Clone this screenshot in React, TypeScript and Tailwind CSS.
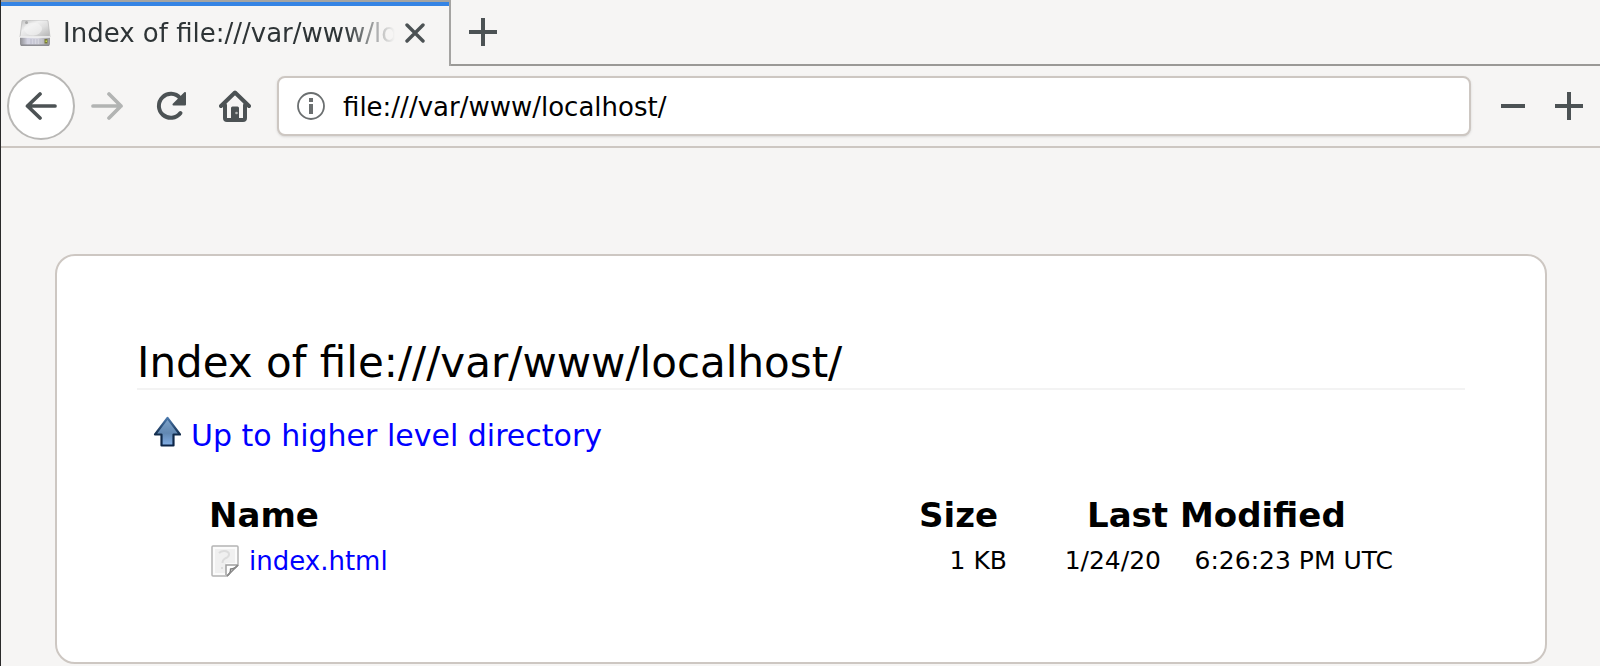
const files = [{ name: "index.html", size: "1 KB", date: "1/24/20", time: "6:26:23 PM UTC" }];

function DriveIcon() {
  return (
    <svg viewBox="0 0 32 26" className="h-[26px] w-8 shrink-0" aria-hidden="true">
      <defs>
        <linearGradient id="drive-top" x1="0" y1="0" x2="1" y2="1">
          <stop offset="0" stopColor="#bdbdbd" />
          <stop offset="0.35" stopColor="#f0f0f0" />
          <stop offset="0.6" stopColor="#dedede" />
          <stop offset="1" stopColor="#b2b2b2" />
        </linearGradient>
        <linearGradient id="drive-front" x1="0" y1="0" x2="1" y2="0">
          <stop offset="0" stopColor="#8e8e92" />
          <stop offset="0.25" stopColor="#d2d2e0" />
          <stop offset="0.6" stopColor="#d8d8e0" />
          <stop offset="1" stopColor="#96969a" />
        </linearGradient>
      </defs>
      <path d="M3 1 Q3 0 5 0 H27 Q29 0 29 1 L31 17 H1 Z" fill="url(#drive-top)" stroke="#bcbcbc" strokeWidth="0.8" />
      <ellipse cx="14" cy="9" rx="9" ry="6.500" fill="#f5f5f5" opacity="0.6" />
      <circle cx="7.500" cy="2.500" r="1.500" fill="#a8a8a8" />
      <path d="M1 17 H31 V24 Q31 26 29 26 H3 Q1 26 1 24 Z" fill="url(#drive-front)" />
      <path d="M1 17 H31" stroke="#f5f5f5" strokeWidth="1.500" />
      <path d="M2 25.200 H30" stroke="#8b8b90" strokeWidth="1.500" />
      <path d="M12 19 V24 M15 19 V24 M18 19 V24 M21 19 V24" stroke="#bcbccb" strokeWidth="1" />
      <rect x="25.500" y="19" width="3" height="4.500" fill="#77783a" />
      <rect x="26.500" y="20.500" width="1.500" height="1.500" fill="#c3d84a" />
    </svg>
  );
}

function FileIcon() {
  return (
    <svg viewBox="0 0 28 32" className="h-8 w-7 shrink-0" aria-hidden="true">
      <path d="M2 1 H26 Q27 1 27 2 V20 L16 31 H2 Q1 31 1 30 V2 Q1 1 2 1 Z" fill="#fbfbfb" stroke="#b4b4b4" strokeWidth="1.500" />
      <path d="M4 4 H24 V18 H15 V28 H4 Z" fill="#f0f0f0" />
      <path d="M8 8 Q10 6 13 6 Q18 6 18 9.500 Q18 12 14 13.500 Q11.500 15 11.500 18 M10 23 H12" fill="none" stroke="#dcdcdc" strokeWidth="2" />
      <path d="M15 30 V20 H26" fill="#fff" stroke="#a0a0a0" strokeWidth="1.500" />
      <path d="M16 31 Q20 28 19.500 24 Q24 24 27 20" fill="#fff" stroke="#7d7d7d" strokeWidth="1.400" strokeLinejoin="round" />
      <path d="M16 31 L27 20" stroke="#8a8a8a" strokeWidth="1.400" />
    </svg>
  );
}

function UpIcon() {
  return (
    <svg viewBox="0 0 28 32" className="h-8 w-7 shrink-0" aria-hidden="true">
      <defs>
        <linearGradient id="up-fill" x1="0" y1="0" x2="0" y2="1">
          <stop offset="0" stopColor="#7fa5cc" />
          <stop offset="0.550" stopColor="#6288b2" />
          <stop offset="1" stopColor="#83afe6" />
        </linearGradient>
        <linearGradient id="up-edge" x1="0" y1="0" x2="0" y2="1">
          <stop offset="0" stopColor="#4a78ac" />
          <stop offset="0.600" stopColor="#122c4c" />
          <stop offset="1" stopColor="#0c2548" />
        </linearGradient>
      </defs>
      <path d="M14.500 2 L27 18.500 H20.500 V29.500 H8.500 V18.500 H2 Z" fill="url(#up-fill)" stroke="url(#up-edge)" strokeWidth="2.200" strokeLinejoin="round" />
    </svg>
  );
}

export default function App() {
  return (
    <div className="flex min-h-screen flex-col border-l border-[#2a2a2a] bg-[#f6f5f4] font-['DejaVu_Sans',sans-serif] text-black">
      <header>
        <div className="flex h-[66px]">
          <div className="flex w-[450px] shrink-0 flex-col border-t-2 border-r-2 border-[#a5a4a2]">
            <div className="h-1 bg-[#3584e4]" />
            <div className="flex h-[54px] items-center pr-[18px] pl-[18px]">
              <DriveIcon />
              <span className="ml-3 min-w-0 flex-1 overflow-hidden text-[26px] leading-8 whitespace-nowrap text-[#2e3436] [mask-image:linear-gradient(to_right,black_85%,transparent)]">
                Index of file:///var/www/localhost/
              </span>
              <button type="button" aria-label="Close tab" className="ml-1 flex h-8 w-8 shrink-0 items-center justify-center text-[#4c5254]">
                <svg viewBox="0 0 20 20" className="size-5" fill="none" stroke="currentColor" strokeWidth="3.400" strokeLinecap="round">
                  <path d="M2 2 L18 18 M18 2 L2 18" />
                </svg>
              </button>
            </div>
          </div>
          <div className="flex flex-1 items-start border-b-2 border-[#9a9996] pt-2 pl-3">
            <button type="button" aria-label="New tab" className="flex h-12 w-10 items-center justify-center text-[#4c5254]">
              <svg viewBox="0 0 28 28" className="size-7" fill="none" stroke="currentColor" strokeWidth="4">
                <path d="M14 0 V28 M0 14 H28" />
              </svg>
            </button>
          </div>
        </div>
        <div className="flex h-[82px] items-center border-b-2 border-[#cdc7c2] pr-[17px] pl-[6px] text-[#4c5254]">
          <button type="button" aria-label="Back" className="flex size-[68px] shrink-0 items-center justify-center rounded-full border-2 border-[#b8b7b5] bg-white">
            <svg viewBox="0 0 32 32" className="size-8" fill="none" stroke="currentColor" strokeWidth="3.700" strokeLinecap="round" strokeLinejoin="round">
              <path d="M30 16 H2.500 M15 4 L2.500 16 L15 28" />
            </svg>
          </button>
          <button type="button" aria-label="Forward" disabled className="flex h-16 w-16 shrink-0 items-center justify-center text-[#b2b4b3]">
            <svg viewBox="0 0 32 32" className="size-8" fill="none" stroke="currentColor" strokeWidth="3.700" strokeLinecap="round" strokeLinejoin="round">
              <path d="M2 16 H30 M18 4 L30 16 L18 28" />
            </svg>
          </button>
          <button type="button" aria-label="Reload" className="flex h-16 w-16 shrink-0 items-center justify-center">
            <svg viewBox="0 0 32 32" className="size-8" fill="none" stroke="currentColor" strokeWidth="4" strokeLinecap="round">
              <path d="M25.500 23 A12 12 0 1 1 25 8" />
              <path d="M30 3 V14.500 H18.500 Z" fill="currentColor" stroke="currentColor" strokeWidth="2" strokeLinejoin="round" />
            </svg>
          </button>
          <button type="button" aria-label="Home" className="flex h-16 w-16 shrink-0 items-center justify-center">
            <svg viewBox="0 0 32 32" className="size-8" fill="none" stroke="currentColor" strokeWidth="4" strokeLinecap="round" strokeLinejoin="round">
              <path d="M2 16 L16 2.500 L30 16" />
              <path d="M6 15 V28 Q6 30 8 30 H24 Q26 30 26 28 V15" />
              <path d="M12 30 V18 Q12 16.500 13.500 16.500 H18.500 Q20 16.500 20 18 V30 Z" fill="currentColor" stroke="none" />
              <circle cx="17.500" cy="23" r="1.300" fill="#b5b7b6" stroke="none" />
            </svg>
          </button>
          <div className="ml-[10px] flex h-[60px] min-w-0 flex-1 items-center rounded-lg border-2 border-[#cdc7c2] bg-white pl-[18px] shadow-sm">
            <svg viewBox="0 0 28 28" className="size-7 shrink-0 text-[#6b6f70]" fill="none" stroke="currentColor" aria-hidden="true">
              <circle cx="14" cy="14" r="13" strokeWidth="1.800" />
              <path d="M14 12 V22" strokeWidth="4" />
              <path d="M14 6 V10" strokeWidth="4" />
            </svg>
            <input type="text" aria-label="Address" defaultValue="file:///var/www/localhost/" className="ml-[18px] h-12 min-w-0 flex-1 bg-transparent pt-[2px] text-[26px] text-black outline-none" />
          </div>
          <button type="button" aria-label="Zoom out" className="ml-7 flex h-12 w-7 shrink-0 items-center justify-center">
            <svg viewBox="0 0 28 28" className="size-7" fill="none" stroke="currentColor" strokeWidth="4">
              <path d="M2 14 H26" />
            </svg>
          </button>
          <button type="button" aria-label="Zoom in" className="ml-7 flex h-12 w-7 shrink-0 items-center justify-center">
            <svg viewBox="0 0 28 28" className="size-7" fill="none" stroke="currentColor" strokeWidth="4">
              <path d="M14 0 V28 M0 14 H28" />
            </svg>
          </button>
        </div>
      </header>
      <main className="mt-[106px] mr-[53px] mb-[2px] ml-[54px] rounded-[20px] border-2 border-[#cdc7c2] bg-white px-20 pt-20 pb-[79px]">
        <h1 className="h-[54px] border-b-2 border-[#f3f3f3] text-[42px] leading-[54px]">Index of file:///var/www/localhost/</h1>
        <p className="mt-[26px] ml-4">
          <a href="#up" className="flex items-start gap-[10px] text-[30px] leading-10 text-[#0000ff]">
            <UpIcon />
            Up to higher level directory
          </a>
        </p>
        <div className="mt-[35px] mr-[70px] ml-[72px]">
          <table className="w-full table-fixed border-collapse text-left">
            <colgroup>
              <col />
              <col className="w-[90px]" />
              <col className="w-[154px]" />
              <col className="w-[234px]" />
            </colgroup>
            <thead>
              <tr className="h-[48px] text-[34px] leading-10 font-bold">
                <th scope="col" className="p-0">Name</th>
                <th scope="col" className="p-0 pl-[2px]">Size</th>
                <th scope="col" colSpan={2} className="p-0 pl-20">Last Modified</th>
              </tr>
            </thead>
            <tbody>
              {files.map((file) => (
                <tr key={file.name} className="h-[44px] text-[25px] leading-8">
                  <td className="p-0 pl-[2px]">
                    <a href="#index" className="flex items-center gap-[10px] text-[26px] text-[#0000ff]">
                      <FileIcon />
                      {file.name}
                    </a>
                  </td>
                  <td className="p-0 text-right">{file.size}</td>
                  <td className="p-0 text-right">{file.date}</td>
                  <td className="p-0 pr-[2px] text-right whitespace-nowrap">{file.time}</td>
                </tr>
              ))}
            </tbody>
          </table>
        </div>
      </main>
    </div>
  );
}
